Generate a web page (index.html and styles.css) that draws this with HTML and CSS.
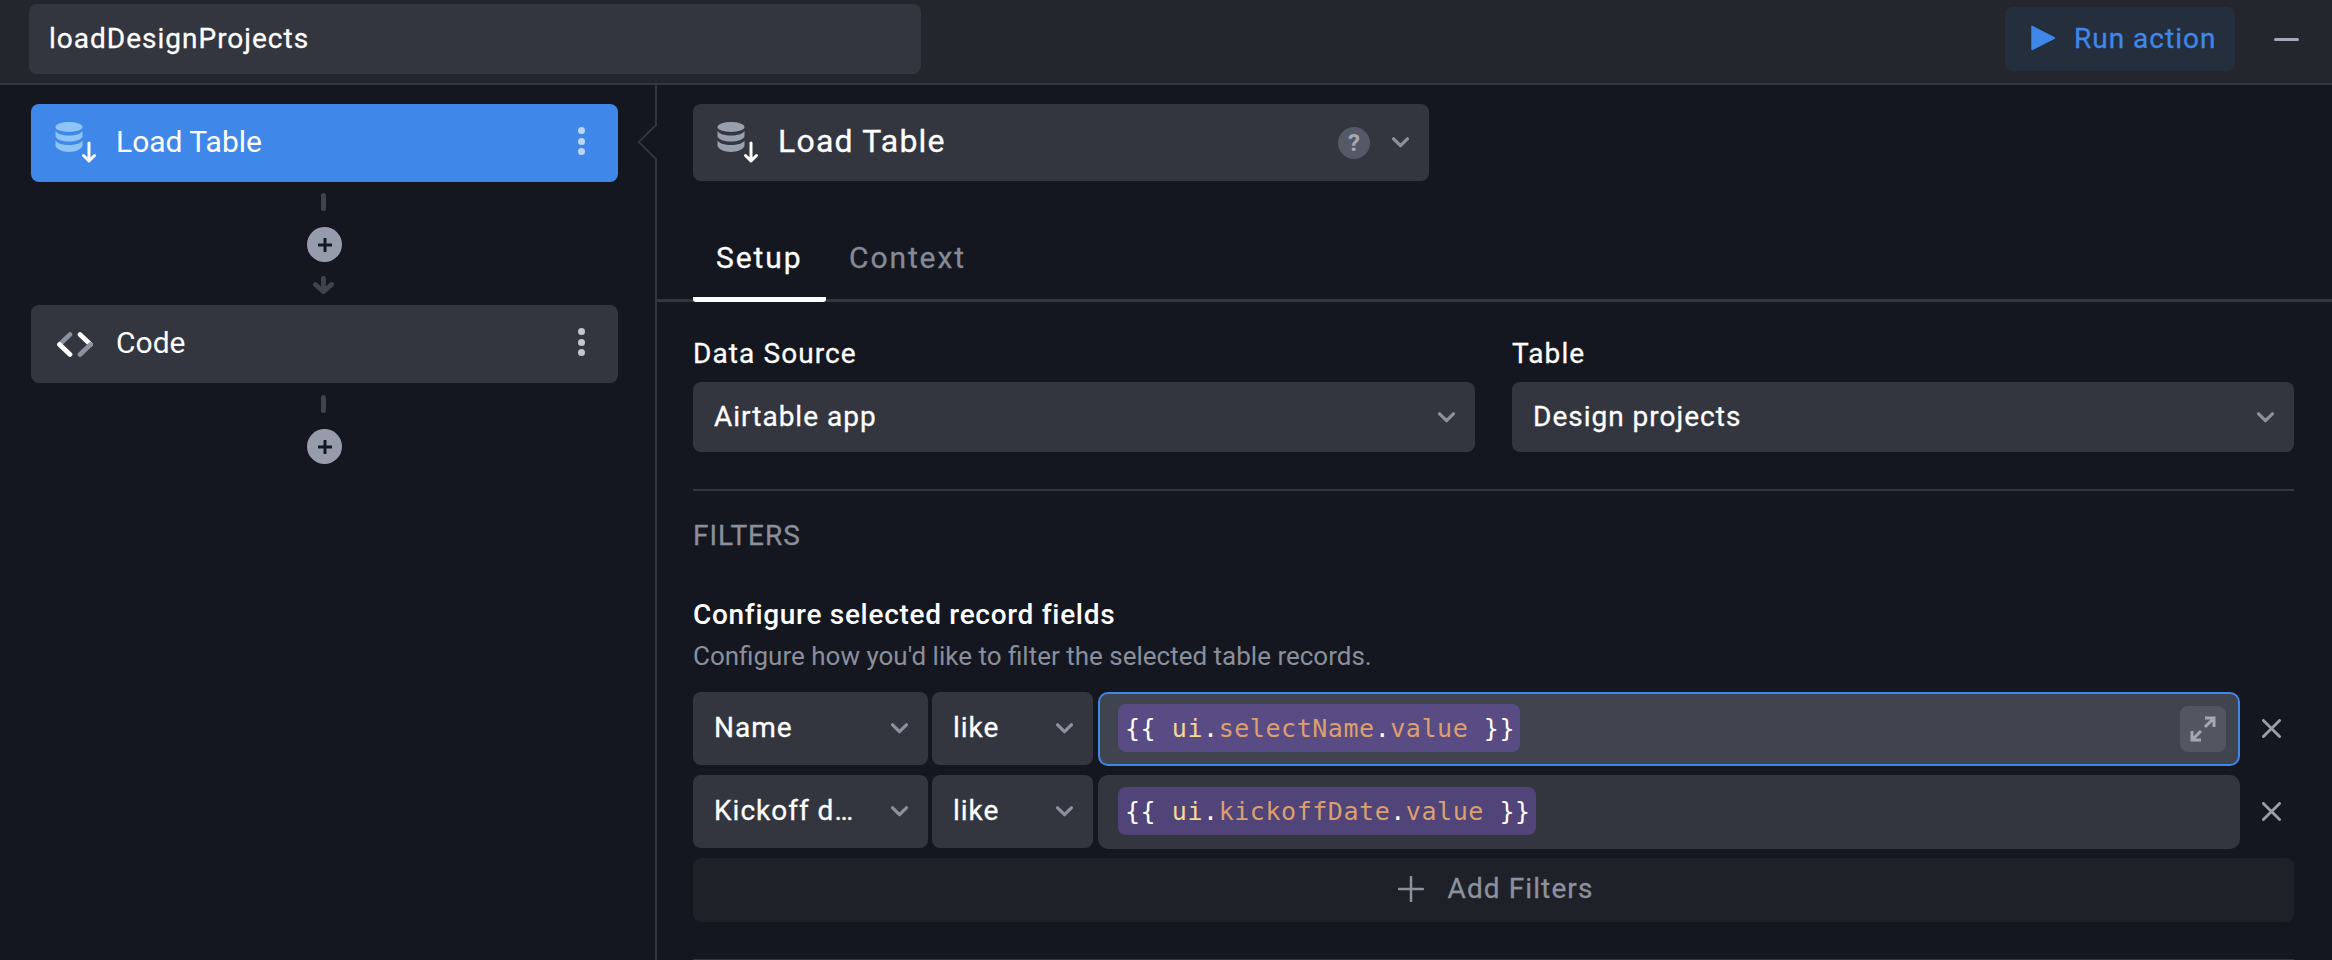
FILE: index.html
```html
<!DOCTYPE html>
<html lang="en">
<head>
<meta charset="utf-8">
<title>loadDesignProjects</title>
<link rel="stylesheet" href="styles.css">
</head>
<body>
<div class="app">
  <header class="topbar">
    <div class="name-input">loadDesignProjects</div>
    <button class="run-btn">
      <svg class="run-icon" viewBox="0 0 24 26"><path d="M1 1.500 23.500 13 1 24.500Z" fill="#3f87e8" stroke="#3f87e8" stroke-width="1.500" stroke-linejoin="round"/></svg>
      <span>Run action</span>
    </button>
    <span class="minimize"></span>
  </header>
  <div class="body">
    <aside class="sidebar">
      <div class="node node-active">
        <svg class="node-icon" viewBox="0 0 42 42"><g fill="#8fc4f6"><ellipse cx="14" cy="5" rx="13.500" ry="5"/><path d="M.5 9c2 3 7 4.500 13.500 4.500S25.500 12 27.500 9v5.500c-1 3-7 5-13.500 5S1.500 17.500.5 14.500Z"/><path d="M.5 18.500c2 3 7 4.500 13.500 4.500s11.500-1.500 13.500-4.500V24c-1 3-7 6-13.500 6S1.500 27 .5 24Z"/></g><path d="M34 21v18M28.500 33.500 34 39l5.500-5.500" fill="none" stroke="#fff" stroke-width="3" stroke-linecap="round" stroke-linejoin="round"/></svg>
        <span class="node-label">Load Table</span>
        <span class="dots dots-light"><i></i><i></i><i></i></span>
      </div>
      <div class="connector">
        <span class="dash"></span>
        <span class="add"><svg viewBox="0 0 14 14"><path d="M7 1v12M1 7h12" stroke="#14171f" stroke-width="3" stroke-linecap="round"/></svg></span>
        <svg class="down" viewBox="0 0 24 18"><path d="M12 2v14M3.500 8.500 12 16l8.500-7.500" fill="none" stroke="#3f434e" stroke-width="5" stroke-linecap="round" stroke-linejoin="round"/></svg>
      </div>
      <div class="node">
        <svg class="node-icon code-icon" viewBox="0 0 36 25"><g fill="none" stroke-width="4.700" stroke-linecap="round"><path d="M13 2.500 2.500 12.500" stroke="#8a91a0"/><path d="M2.500 12.500 13 22.500" stroke="#fff"/><path d="M23 2.500 33.500 12.500" stroke="#fff"/><path d="M33.500 12.500 23 22.500" stroke="#8a91a0"/></g></svg>
        <span class="node-label">Code</span>
        <span class="dots"><i></i><i></i><i></i></span>
      </div>
      <div class="connector connector-end">
        <span class="dash"></span>
        <span class="add"><svg viewBox="0 0 14 14"><path d="M7 1v12M1 7h12" stroke="#14171f" stroke-width="3" stroke-linecap="round"/></svg></span>
      </div>
    </aside>
    <main class="panel">
      <span class="notch"></span>
      <div class="action-card">
        <svg class="node-icon" viewBox="0 0 42 42"><g fill="#98a0ae"><ellipse cx="14" cy="5" rx="13.500" ry="5"/><path d="M.5 9c2 3 7 4.500 13.500 4.500S25.500 12 27.500 9v5.500c-1 3-7 5-13.500 5S1.500 17.500.5 14.500Z"/><path d="M.5 18.500c2 3 7 4.500 13.500 4.500s11.500-1.500 13.500-4.500V24c-1 3-7 6-13.500 6S1.500 27 .5 24Z"/></g><path d="M34 21v18M28.500 33.500 34 39l5.500-5.500" fill="none" stroke="#fff" stroke-width="3" stroke-linecap="round" stroke-linejoin="round"/></svg>
        <span class="node-label">Load Table</span>
        <span class="help">?</span>
        <svg class="chev" viewBox="0 0 16 10"><path d="M1.500 1.500 8 8l6.500-6.500" fill="none" stroke="#8d919e" stroke-width="3" stroke-linecap="round" stroke-linejoin="round"/></svg>
      </div>
      <nav class="tabs">
        <span class="tab tab-active">Setup</span>
        <span class="tab">Context</span>
      </nav>
      <section class="content">
        <div class="source-grid">
          <div>
            <div class="label">Data Source</div>
            <div class="select select-tall"><span class="select-text">Airtable app</span><svg class="chev" viewBox="0 0 16 10"><path d="M1.500 1.500 8 8l6.500-6.500" fill="none" stroke="#8d919e" stroke-width="3" stroke-linecap="round" stroke-linejoin="round"/></svg></div>
          </div>
          <div>
            <div class="label">Table</div>
            <div class="select select-tall"><span class="select-text">Design projects</span><svg class="chev" viewBox="0 0 16 10"><path d="M1.500 1.500 8 8l6.500-6.500" fill="none" stroke="#8d919e" stroke-width="3" stroke-linecap="round" stroke-linejoin="round"/></svg></div>
          </div>
        </div>
        <hr class="divider">
        <h2 class="section-title">FILTERS</h2>
        <h3 class="field-title">Configure selected record fields</h3>
        <p class="field-sub">Configure how you'd like to filter the selected table records.</p>
        <div class="filter-row">
          <div class="select select-name"><span class="select-text">Name</span><svg class="chev" viewBox="0 0 16 10"><path d="M1.500 1.500 8 8l6.500-6.500" fill="none" stroke="#8d919e" stroke-width="3" stroke-linecap="round" stroke-linejoin="round"/></svg></div>
          <div class="select select-op"><span class="select-text">like</span><svg class="chev" viewBox="0 0 16 10"><path d="M1.500 1.500 8 8l6.500-6.500" fill="none" stroke="#8d919e" stroke-width="3" stroke-linecap="round" stroke-linejoin="round"/></svg></div>
          <div class="value value-focus">
            <code class="pill pill-focus"><span class="w">{{ </span><span class="y">ui</span><span class="w">.</span><span class="o">selectName</span><span class="w">.</span><span class="o">value</span><span class="w"> }}</span></code>
            <span class="expand"><svg viewBox="0 0 26 26"><path d="M15 2h9v9M24 2 15 11M11 24H2v-9M2 24l9-9" fill="none" stroke="#a4a8b6" stroke-width="3" stroke-linejoin="miter"/></svg></span>
          </div>
          <svg class="close" viewBox="0 0 20 20"><path d="M1.500 1.500l17 17M18.500 1.500l-17 17" stroke="#9a9ea9" stroke-width="3" stroke-linecap="round"/></svg>
        </div>
        <div class="filter-row">
          <div class="select select-name"><span class="select-text">Kickoff d…</span><svg class="chev" viewBox="0 0 16 10"><path d="M1.500 1.500 8 8l6.500-6.500" fill="none" stroke="#8d919e" stroke-width="3" stroke-linecap="round" stroke-linejoin="round"/></svg></div>
          <div class="select select-op"><span class="select-text">like</span><svg class="chev" viewBox="0 0 16 10"><path d="M1.500 1.500 8 8l6.500-6.500" fill="none" stroke="#8d919e" stroke-width="3" stroke-linecap="round" stroke-linejoin="round"/></svg></div>
          <div class="value">
            <code class="pill"><span class="w">{{ </span><span class="y">ui</span><span class="w">.</span><span class="o">kickoffDate</span><span class="w">.</span><span class="o">value</span><span class="w"> }}</span></code>
          </div>
          <svg class="close" viewBox="0 0 20 20"><path d="M1.500 1.500l17 17M18.500 1.500l-17 17" stroke="#9a9ea9" stroke-width="3" stroke-linecap="round"/></svg>
        </div>
        <button class="add-filter">
          <svg viewBox="0 0 26 26"><path d="M13 1v24M1 13h24" stroke="#8d919e" stroke-width="2.500" stroke-linecap="round"/></svg>
          <span>Add Filters</span>
        </button>
        <hr class="divider divider-end">
      </section>
    </main>
  </div>
</div>
</body>
</html>
```

FILE: styles.css
```css
* { box-sizing: border-box; }
html, body { margin: 0; padding: 0; height: 960px; overflow: hidden; background: #14171f; }
body { font-family: Roboto, "Liberation Sans", sans-serif; font-size: 28px; color: #fff; }
button { font: inherit; border: 0; margin: 0; }
.app { display: flex; flex-direction: column; height: 960px; overflow: hidden; }

.topbar { flex: none; height: 85px; display: flex; align-items: flex-start; padding: 4px 33px 0 29px; background: #24262e; border-bottom: 2px solid #33363f; }
.name-input, .run-btn, .action-card .node-label, .tab, .label, .select-text, .section-title, .add-filter { -webkit-text-stroke: .3px currentColor; }
.name-input { width: 892px; height: 70px; padding: 0 0 2px 20px; display: flex; align-items: center; background: #33363f; border-radius: 8px; letter-spacing: 1px; }
.run-btn { margin: 3px 0 0 auto; width: 230px; height: 64px; display: flex; align-items: center; padding: 0 0 2px 26px; background: #252e3d; color: #3f87e8; border-radius: 8px; letter-spacing: 1px; }
.run-icon { width: 24px; height: 26px; margin-right: 19px; }
.minimize { width: 25px; height: 3px; margin: 34px 0 0 39px; background: #a4a8b6; border-radius: 2px; }

.body { flex: 1; display: flex; min-height: 0; }
.sidebar { flex: none; width: 657px; padding: 19px 37px 0 31px; border-right: 2px solid #33363f; }
.node { height: 78px; display: flex; align-items: center; padding: 0 0 0 24px; background: #33363f; border-radius: 8px; }
.node-active { background: #3f87e8; }
.node-icon { flex: none; width: 42px; height: 42px; margin-right: 19px; }
.code-icon { width: 36px; height: 25px; margin: 0 23px 0 2px; }
.node-label { font-size: 30px; padding-bottom: 3px; }
.dots { margin-left: auto; margin-right: 33px; display: flex; flex-direction: column; gap: 3.500px; transform: translateY(-2px); }
.dots i { display: block; width: 7px; height: 7px; border-radius: 50%; background: #c4c7ce; }
.dots-light i { background: #bcd6f5; }

.connector { height: 123px; padding-top: 11px; display: flex; flex-direction: column; align-items: center; }
.connector-end { height: 90px; padding-top: 12px; }
.dash { flex: none; width: 5px; height: 18px; border-radius: 2.500px; background: #3f434e; margin-left: -2px; }
.add { flex: none; width: 35px; height: 35px; margin-top: 16px; border-radius: 50%; background: #969cac; display: flex; align-items: center; justify-content: center; }
.add svg { width: 14px; height: 14px; }
.down { flex: none; width: 23px; height: 18px; margin: 14px 0 0 -2px; }

.panel { position: relative; flex: 1; min-width: 0; padding-top: 19px; }
.notch { position: absolute; left: -15px; top: 44px; width: 26px; height: 26px; background: #14171f; border-left: 2px solid #33363f; border-bottom: 2px solid #33363f; transform: rotate(45deg) scale(.95); z-index: 1; }
.action-card { margin-left: 36px; width: 736px; height: 77px; display: flex; align-items: center; padding-left: 24px; background: #33363f; border-radius: 8px; }
.action-card .node-label { letter-spacing: 1.200px; font-size: 32px; }
.help { width: 32px; height: 32px; margin: 0 0 0 auto; border-radius: 50%; background: #555965; color: #a4a8b6; display: flex; align-items: center; justify-content: center; font-size: 24px; font-weight: 700; }
.action-card .chev { margin: 0 20px 0 22px; }
.chev { flex: none; width: 17px; height: 11px; }

.tabs { margin-top: 40px; height: 81px; display: flex; padding-left: 36px; border-bottom: 3px solid #33363f; }
.tab { height: 81px; padding: 17px 23px 0; font-size: 30px; letter-spacing: 1.900px; color: #858a97; line-height: 40px; }
.tab-active { width: 133px; color: #fff; border-bottom: 5px solid #fff; border-radius: 0 0 3px 3px; }

.content { padding: 36px 38px 0 36px; }
.source-grid { display: grid; grid-template-columns: 782px 1fr; column-gap: 37px; }
.label { height: 32px; line-height: 32px; margin-bottom: 12px; letter-spacing: 1.100px; }
.select { display: flex; align-items: center; justify-content: space-between; background: #33363f; border-radius: 8px; padding: 0 20px 0 21px; flex: none; }
.select-tall { height: 70px; }
.select-text { letter-spacing: 1px; white-space: nowrap; min-width: 0; padding-bottom: 2px; }
.divider { border: 0; height: 2px; margin: 37px 0 0; background: #33363f; }
.section-title { margin: 30px 0 0; height: 30px; line-height: 30px; font-size: 28px; font-weight: 400; letter-spacing: 1px; color: #8a8f9b; }
.field-title { margin: 48px 0 0; height: 32px; line-height: 32px; font-size: 28px; font-weight: 500; letter-spacing: .7px; font-variant-ligatures: common-ligatures; }
.field-sub { margin: 9px 0 20px; height: 32px; line-height: 32px; font-size: 26px; color: #8a8f9b; }

.filter-row { display: flex; align-items: flex-start; margin-bottom: 9px; }
.select-name { width: 235px; height: 73px; margin-right: 4px; }
.select-op { width: 161px; height: 73px; margin-right: 5px; }
.value { flex: 1; height: 74px; display: flex; align-items: center; padding: 0 14px 0 20px; background: #33363f; border-radius: 10px; }
.value-focus { background: #3f444e; border: 2px solid #3f87e8; padding-left: 18px; padding-right: 12px; }
.pill { height: 48px; margin-bottom: 2px; display: flex; align-items: center; padding: 0 5px 0 7px; background: #504479; border-radius: 8px; font-family: "DejaVu Sans Mono", "Liberation Mono", monospace; font-size: 25px; letter-spacing: .55px; white-space: pre; }
.pill-focus { background: #594c84; }
.w { color: #fff; }
.y { color: #f7d794; }
.o { color: #dc9f6e; }
.expand { margin-left: auto; width: 46px; height: 46px; border-radius: 8px; background: #525661; display: flex; align-items: center; justify-content: center; }
.expand svg { width: 26px; height: 26px; }
.close { flex: none; width: 19px; height: 19px; margin: 27px 13px 0 22px; }

.add-filter { width: 100%; height: 64px; display: flex; align-items: center; justify-content: center; gap: 24px; padding: 0 0 3px 4px; background: #1e2128; color: #8d919e; border-radius: 8px; letter-spacing: 1.100px; }
.add-filter svg { width: 26px; height: 26px; }
.divider-end { margin-top: 37px; }
```
